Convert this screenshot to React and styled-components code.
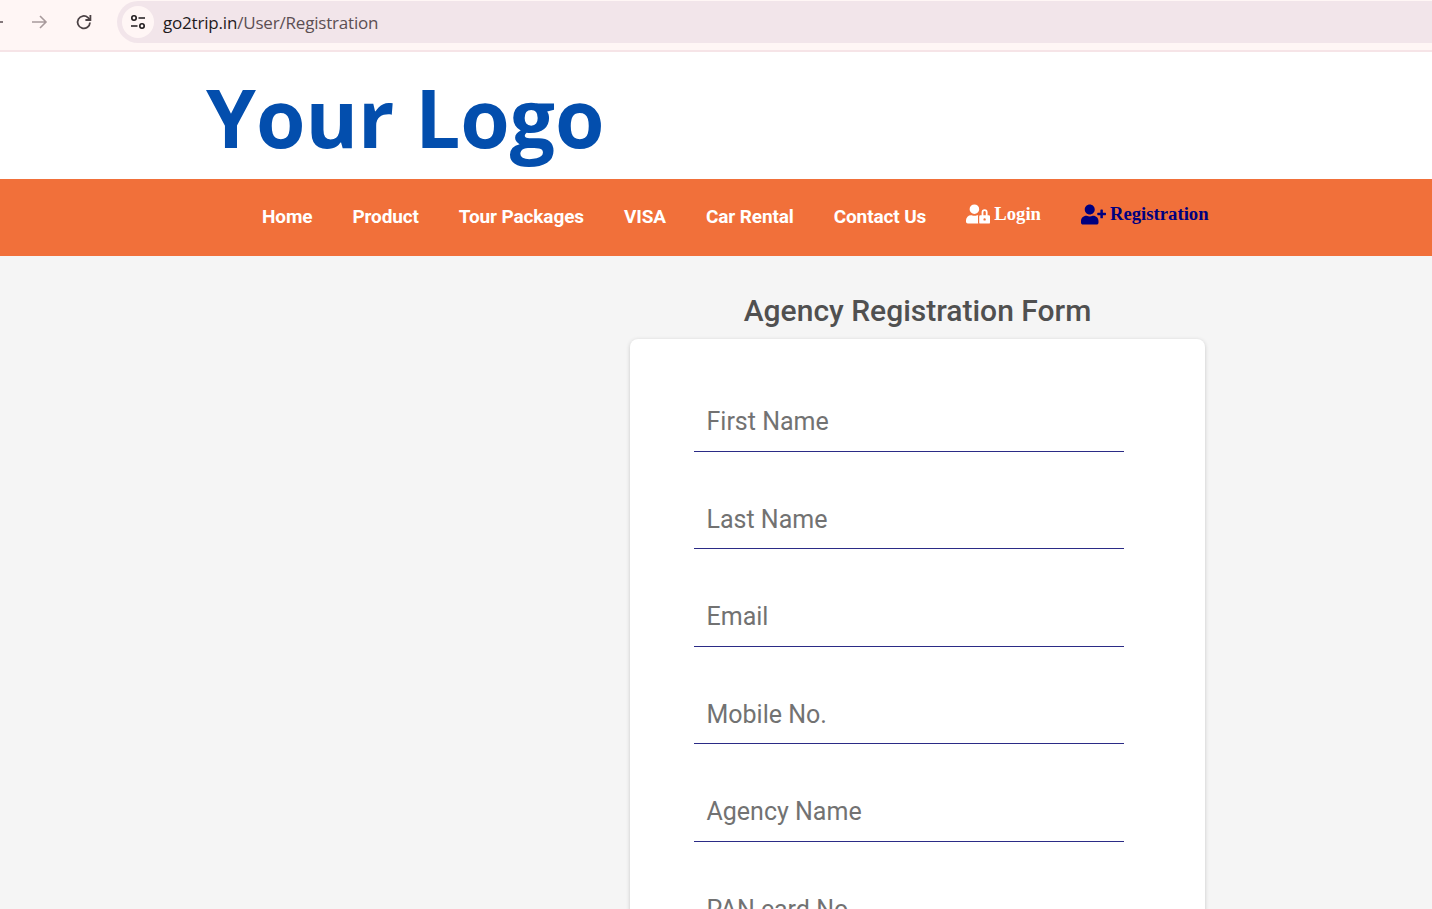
import React from 'react';
import styled, { createGlobalStyle } from 'styled-components';
import { FaUserLock, FaUserPlus } from 'react-icons/fa';

const GlobalStyle = createGlobalStyle`
  html, body {
    margin: 0;
    height: 100%;
    overflow: hidden;
    background: #f5f5f5;
  }
  #root {
    height: 100%;
    overflow: hidden;
  }
`;

const BrowserBar = styled.div`
  display: flex;
  align-items: center;
  height: 42px;
  padding: 1px 0 7px;
  background: #fff6f5;
  border-bottom: 2px solid #f6e4e7;
`;

const NavButton = styled.span`
  display: flex;
  width: ${(p) => p.$w}px;
  justify-content: center;
  color: ${(p) => p.$color};
`;

const BackArrow = styled.svg`
  flex: none;
  margin-left: -14px;
`;

const Omnibox = styled.div`
  flex: 1;
  display: flex;
  align-items: center;
  height: 42px;
  margin-left: 21px;
  padding-left: 5px;
  gap: 9px;
  background: #f2e5ea;
  border-radius: 21px 0 0 21px;
`;

const SiteChip = styled.span`
  display: flex;
  align-items: center;
  justify-content: center;
  width: 32px;
  height: 32px;
  border-radius: 50%;
  background: #fff6f5;
`;

const Url = styled.span`
  font-family: 'Segoe UI', 'Open Sans', 'Noto Sans', sans-serif;
  font-size: 17px;
  letter-spacing: -0.19px;
  color: #5c4f53;
  b {
    font-weight: 400;
    color: #1f1a1c;
  }
`;

const LogoBar = styled.header`
  height: 127px;
  background: #fff;
  padding-left: 206px;
`;

const Logo = styled.div`
  font-family: 'Open Sans', sans-serif;
  font-weight: 700;
  font-size: 80px;
  line-height: 130px;
  color: #034ead;
`;

const Menu = styled.nav`
  display: flex;
  align-items: center;
  height: 77px;
  padding-left: 262px;
  gap: 40px;
  background: #f1703a;
`;

const MenuLink = styled.a`
  margin-top: -2px;
  font-family: Roboto, sans-serif;
  font-weight: 700;
  font-size: 19px;
  letter-spacing: -0.12px;
  color: #fff;
  text-decoration: none;
`;

const AuthLink = styled.a`
  display: flex;
  align-items: center;
  gap: 4px;
  margin-top: -7px;
  font-family: 'Liberation Serif', serif;
  font-weight: 700;
  font-size: 18.7px;
  color: ${(p) => p.$color};
  text-decoration: none;
`;

const Main = styled.main`
  display: flex;
  flex-direction: column;
  width: 575px;
  margin-left: 630px;
`;

const Title = styled.h2`
  margin: 37px 0 10px;
  text-align: center;
  font-family: Roboto, sans-serif;
  font-weight: 500;
  font-size: 30px;
  line-height: 36px;
  color: #505050;
`;

const Card = styled.form`
  display: flex;
  flex-direction: column;
  gap: 10px;
  padding: 25px 81px 40px 64px;
  background: #fff;
  border-radius: 8px;
  box-shadow: 0 1px 4px rgba(0, 0, 0, 0.18);
`;

const Field = styled.label`
  display: flex;
  align-items: center;
  height: 87.5px;
  padding: 28.5px 12.5px 0;
  box-sizing: border-box;
  border-bottom: 1px solid #2b2b86;
  font-family: Roboto, sans-serif;
  font-size: 25px;
  color: #727272;
`;

const fields = ['First Name', 'Last Name', 'Email', 'Mobile No.', 'Agency Name', 'PAN card No.'];
const links = ['Home', 'Product', 'Tour Packages', 'VISA', 'Car Rental', 'Contact Us'];

const App = () => (
  <>
    <GlobalStyle />
    <BrowserBar>
      <NavButton $w={6} $color="#5c4f53">
        <BackArrow width="20" height="20" viewBox="0 0 20 20" fill="none" stroke="currentColor" strokeWidth="1.6">
          <path d="M17 10H3M9 4l-6 6 6 6" />
        </BackArrow>
      </NavButton>
      <NavButton $w={66} $color="#a89a9c">
        <svg width="20" height="20" viewBox="0 0 20 20" fill="none" stroke="currentColor" strokeWidth="1.6">
          <path d="M3 10h14M11 4l6 6-6 6" />
        </svg>
      </NavButton>
      <NavButton $w={24} $color="#4c4245">
        <svg width="20" height="20" viewBox="0 0 20 20" fill="none" stroke="currentColor" strokeWidth="1.8">
          <path d="M16 10.5A6.2 6.2 0 1 1 14 5.6L16 7.6" />
          <path d="M16.4 3v5h-5" />
        </svg>
      </NavButton>
      <Omnibox>
        <SiteChip>
          <svg width="18" height="18" viewBox="0 0 18 18" fill="none" stroke="#1f1a1c" strokeWidth="1.6">
            <circle cx="5" cy="5" r="2.2" />
            <path d="M9.5 5H16M2 13h6.5" />
            <circle cx="13" cy="13" r="2.2" />
          </svg>
        </SiteChip>
        <Url>
          <b>go2trip.in</b>/User/Registration
        </Url>
      </Omnibox>
    </BrowserBar>
    <LogoBar>
      <Logo>Your Logo</Logo>
    </LogoBar>
    <Menu>
      {links.map((l) => (
        <MenuLink key={l} href="#">{l}</MenuLink>
      ))}
      <AuthLink href="#" $color="#fff">
        <FaUserLock size={24} />
        Login
      </AuthLink>
      <AuthLink href="#" $color="#00007f">
        <FaUserPlus size={25} />
        Registration
      </AuthLink>
    </Menu>
    <Main>
      <Title>Agency Registration Form</Title>
      <Card>
        {fields.map((f) => (
          <Field key={f}>{f}</Field>
        ))}
      </Card>
    </Main>
  </>
);

export default App;
